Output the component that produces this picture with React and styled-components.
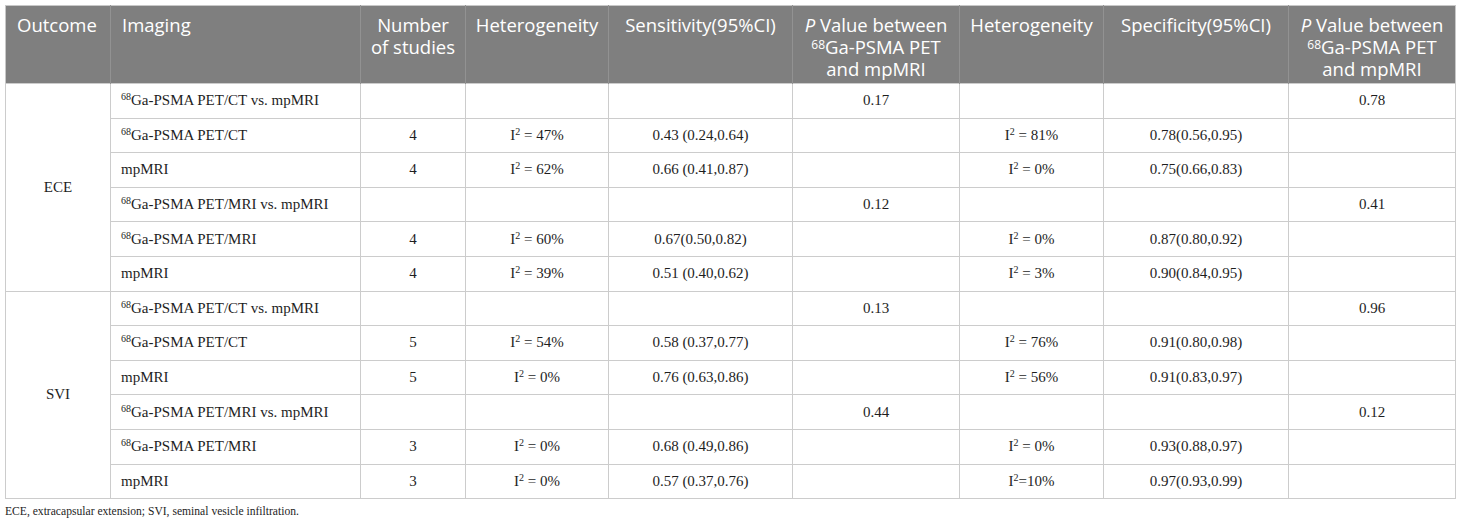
import React from 'react';
import styled, { createGlobalStyle } from 'styled-components';

const GlobalStyle = createGlobalStyle`
  html, body {
    margin: 0;
    padding: 0;
    background: #ffffff;
  }
`;

const Page = styled.div`
  padding: 5px 5px 0 5px;
  width: 1450px;
`;

const Table = styled.table`
  width: 1450px;
  table-layout: fixed;
  border-collapse: collapse;
  border: 1px solid #c8c8c8;
  font-family: "Liberation Serif", "Times New Roman", serif;
  font-size: 15px;
  color: #1e1e1e;
`;

const HeadRow = styled.tr`
  height: 78px;
  background: #7f7f7f;
`;

const Th = styled.th`
  font-family: "Open Sans", "Noto Sans", sans-serif;
  font-weight: 400;
  font-size: 18.5px;
  line-height: 22px;
  color: #ffffff;
  text-align: ${(p) => (p.$left ? 'left' : 'center')};
  vertical-align: top;
  padding: 8px ${(p) => (p.$tight ? '4px' : '10px')} 0 ${(p) => (p.$left ? '11px' : p.$tight ? '4px' : '10px')};
  border-left: 1px solid #929292;
  &:first-child {
    border-left: none;
  }
`;

const Row = styled.tr`
  height: 34.6px;
`;

const Td = styled.td`
  border: 1px solid #cccccc;
  padding: 0 10px;
  text-align: ${(p) => (p.$left ? 'left' : 'center')};
  vertical-align: middle;
`;

const Sup = styled.sup`
  font-size: 10px;
  line-height: 0;
  vertical-align: 5px;
`;

const HeadSup = styled.sup`
  font-size: 12px;
  line-height: 0;
  vertical-align: 5px;
`;

const Note = styled.p`
  margin: 6px 0 0 0;
  font-family: "Liberation Serif", "Times New Roman", serif;
  font-size: 11.6px;
  color: #1e1e1e;
`;

const widths = [105, 250, 105, 143, 184, 167, 144, 185, 167];

const Ga = ({ rest }) => (
  <>
    <Sup>68</Sup>
    {rest}
  </>
);

const I2 = ({ v }) => (
  <>
    I<Sup>2</Sup>
    {v}
  </>
);

const groups = [
  {
    name: 'ECE',
    rows: [
      [<Ga rest="Ga-PSMA PET/CT vs. mpMRI" />, '', '', '', '0.17', '', '', '0.78'],
      [<Ga rest="Ga-PSMA PET/CT" />, '4', <I2 v=" = 47%" />, '0.43 (0.24,0.64)', '', <I2 v=" = 81%" />, '0.78(0.56,0.95)', ''],
      ['mpMRI', '4', <I2 v=" = 62%" />, '0.66 (0.41,0.87)', '', <I2 v=" = 0%" />, '0.75(0.66,0.83)', ''],
      [<Ga rest="Ga-PSMA PET/MRI vs. mpMRI" />, '', '', '', '0.12', '', '', '0.41'],
      [<Ga rest="Ga-PSMA PET/MRI" />, '4', <I2 v=" = 60%" />, '0.67(0.50,0.82)', '', <I2 v=" = 0%" />, '0.87(0.80,0.92)', ''],
      ['mpMRI', '4', <I2 v=" = 39%" />, '0.51 (0.40,0.62)', '', <I2 v=" = 3%" />, '0.90(0.84,0.95)', ''],
    ],
  },
  {
    name: 'SVI',
    rows: [
      [<Ga rest="Ga-PSMA PET/CT vs. mpMRI" />, '', '', '', '0.13', '', '', '0.96'],
      [<Ga rest="Ga-PSMA PET/CT" />, '5', <I2 v=" = 54%" />, '0.58 (0.37,0.77)', '', <I2 v=" = 76%" />, '0.91(0.80,0.98)', ''],
      ['mpMRI', '5', <I2 v=" = 0%" />, '0.76 (0.63,0.86)', '', <I2 v=" = 56%" />, '0.91(0.83,0.97)', ''],
      [<Ga rest="Ga-PSMA PET/MRI vs. mpMRI" />, '', '', '', '0.44', '', '', '0.12'],
      [<Ga rest="Ga-PSMA PET/MRI" />, '3', <I2 v=" = 0%" />, '0.68 (0.49,0.86)', '', <I2 v=" = 0%" />, '0.93(0.88,0.97)', ''],
      ['mpMRI', '3', <I2 v=" = 0%" />, '0.57 (0.37,0.76)', '', <I2 v="=10%" />, '0.97(0.93,0.99)', ''],
    ],
  },
];

const PHead = () => (
  <>
    <i>P</i> Value between <HeadSup>68</HeadSup>Ga-PSMA PET and mpMRI
  </>
);

export default function App() {
  return (
    <Page>
      <GlobalStyle />
      <Table>
        <colgroup>
          {widths.map((w, i) => (
            <col key={i} style={{ width: w }} />
          ))}
        </colgroup>
        <thead>
          <HeadRow>
            <Th $left>Outcome</Th>
            <Th $left>Imaging</Th>
            <Th $tight>
              Number
              <br />
              of studies
            </Th>
            <Th $tight>Heterogeneity</Th>
            <Th>Sensitivity(95%CI)</Th>
            <Th $tight>
              <PHead />
            </Th>
            <Th $tight>Heterogeneity</Th>
            <Th>Specificity(95%CI)</Th>
            <Th $tight>
              <PHead />
            </Th>
          </HeadRow>
        </thead>
        <tbody>
          {groups.map((g) =>
            g.rows.map((r, i) => (
              <Row key={g.name + i}>
                {i === 0 && <Td rowSpan={g.rows.length}>{g.name}</Td>}
                {r.map((c, j) => (
                  <Td key={j} $left={j === 0}>
                    {c}
                  </Td>
                ))}
              </Row>
            ))
          )}
        </tbody>
      </Table>
      <Note>ECE, extracapsular extension; SVI, seminal vesicle infiltration.</Note>
    </Page>
  );
}
